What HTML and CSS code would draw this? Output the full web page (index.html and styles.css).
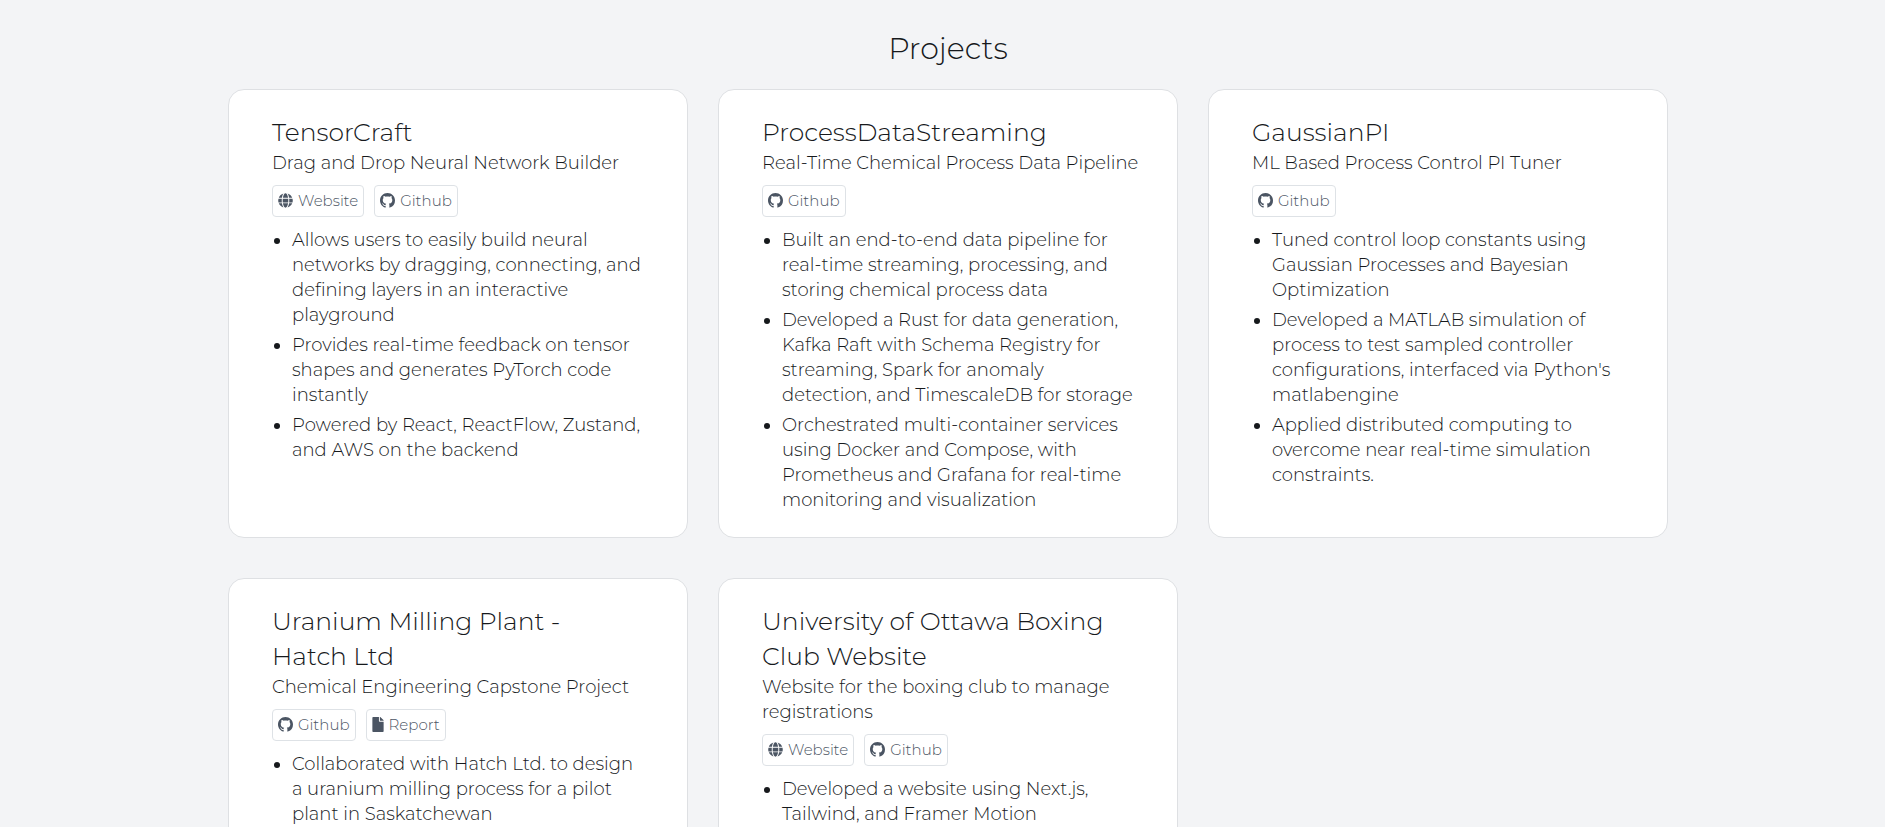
FILE: index.html
```html
<!DOCTYPE html>
<html lang="en">
<head>
<meta charset="utf-8">
<meta name="viewport" content="width=device-width, initial-scale=1">
<title>Projects</title>
<link rel="stylesheet" href="styles.css">
</head>
<body>
<svg class="sprite" aria-hidden="true">
  <symbol id="globe" viewBox="0 0 496 512"><path d="M336.500 160C322 70.700 287.800 8 248 8s-74 62.700-88.500 152h177zM152 256c0 22.200 1.200 43.500 3.300 64h185.300c2.100-20.500 3.300-41.800 3.300-64s-1.200-43.500-3.300-64H155.300c-2.100 20.500-3.300 41.800-3.300 64zm324.700-96c-28.600-67.900-86.500-120.400-158-141.600 24.400 33.800 41.200 84.700 50 141.600h108zM177.200 18.400C105.800 39.600 47.800 92.100 19.300 160h108c8.700-56.900 25.500-107.800 49.900-141.600zM487.400 192H372.700c2.100 21 3.300 42.500 3.300 64s-1.200 43-3.300 64h114.600c5.500-20.500 8.600-41.800 8.600-64s-3.100-43.500-8.500-64zM120 256c0-21.500 1.200-43 3.300-64H8.600C3.200 212.500 0 233.800 0 256s3.200 43.500 8.600 64h114.600c-2-21-3.200-42.500-3.200-64zm39.500 96c14.500 89.300 48.700 152 88.500 152s74-62.700 88.500-152h-177zm159.300 141.600c71.400-21.200 129.400-73.700 158-141.600h-108c-8.800 56.900-25.600 107.800-50 141.600zM19.300 352c28.600 67.900 86.500 120.400 158 141.600-24.400-33.800-41.200-84.700-50-141.600h-108z"/></symbol>
  <symbol id="github" viewBox="0 0 16 16"><path d="M8 0C3.580 0 0 3.580 0 8c0 3.540 2.290 6.530 5.470 7.590.4.070.55-.17.55-.38 0-.19-.01-.82-.01-1.490-2.010.37-2.530-.49-2.690-.94-.09-.23-.48-.94-.82-1.130-.28-.15-.68-.52-.01-.53.63-.01 1.080.58 1.230.82.72 1.210 1.870.87 2.330.66.07-.52.28-.87.51-1.070-1.780-.2-3.640-.89-3.640-3.950 0-.87.31-1.590.82-2.150-.08-.2-.36-1.020.08-2.120 0 0 .67-.21 2.200.82.64-.18 1.320-.27 2-.27s1.360.09 2 .27c1.530-1.040 2.200-.82 2.200-.82.44 1.100.16 1.920.08 2.120.51.56.82 1.270.82 2.150 0 3.070-1.870 3.750-3.650 3.950.29.25.54.73.54 1.480 0 1.070-.01 1.930-.01 2.200 0 .21.15.46.55.38A8.010 8.010 0 0 0 16 8c0-4.420-3.580-8-8-8z"/></symbol>
  <symbol id="file" viewBox="0 0 384 512"><path d="M224 136V0H24C10.700 0 0 10.700 0 24v464c0 13.300 10.700 24 24 24h336c13.300 0 24-10.700 24-24V160H248c-13.200 0-24-10.800-24-24zm160-14.100v6.100H256V0h6.100c6.400 0 12.500 2.500 17 7l97.900 98c4.500 4.500 7 10.600 7 16.900z"/></symbol>
</svg>
<main class="projects">
  <h1 class="heading">Projects</h1>
  <div class="grid">
    <article class="card">
      <h2 class="title">TensorCraft</h2>
      <p class="subtitle">Drag and Drop Neural Network Builder</p>
      <div class="links">
        <a class="link" href="#"><svg class="icon"><use href="#globe"/></svg>Website</a>
        <a class="link" href="#"><svg class="icon"><use href="#github"/></svg>Github</a>
      </div>
      <ul class="points">
        <li>Allows users to easily build neural networks by dragging, connecting, and defining layers in an interactive playground</li>
        <li>Provides real-time feedback on tensor shapes and generates PyTorch code instantly</li>
        <li>Powered by React, ReactFlow, Zustand, and AWS on the backend</li>
      </ul>
    </article>
    <article class="card">
      <h2 class="title">ProcessDataStreaming</h2>
      <p class="subtitle">Real-Time Chemical Process Data Pipeline</p>
      <div class="links">
        <a class="link" href="#"><svg class="icon"><use href="#github"/></svg>Github</a>
      </div>
      <ul class="points">
        <li>Built an end-to-end data pipeline for real-time streaming, processing, and storing chemical process data</li>
        <li>Developed a Rust for data generation, Kafka Raft with Schema Registry for streaming, Spark for anomaly detection, and TimescaleDB for storage</li>
        <li>Orchestrated multi-container services using Docker and Compose, with Prometheus and Grafana for real-time monitoring and visualization</li>
      </ul>
    </article>
    <article class="card">
      <h2 class="title">GaussianPI</h2>
      <p class="subtitle">ML Based Process Control PI Tuner</p>
      <div class="links">
        <a class="link" href="#"><svg class="icon"><use href="#github"/></svg>Github</a>
      </div>
      <ul class="points">
        <li>Tuned control loop constants using Gaussian Processes and Bayesian Optimization</li>
        <li>Developed a MATLAB simulation of process to test sampled controller configurations, interfaced via Python's matlabengine</li>
        <li>Applied distributed computing to overcome near real-time simulation constraints.</li>
      </ul>
    </article>
    <article class="card">
      <h2 class="title">Uranium Milling Plant - Hatch Ltd</h2>
      <p class="subtitle">Chemical Engineering Capstone Project</p>
      <div class="links">
        <a class="link" href="#"><svg class="icon"><use href="#github"/></svg>Github</a>
        <a class="link" href="#"><svg class="icon icon-file"><use href="#file"/></svg>Report</a>
      </div>
      <ul class="points">
        <li>Collaborated with Hatch Ltd. to design a uranium milling process for a pilot plant in Saskatchewan</li>
      </ul>
    </article>
    <article class="card">
      <h2 class="title">University of Ottawa Boxing Club Website</h2>
      <p class="subtitle">Website for the boxing club to manage registrations</p>
      <div class="links">
        <a class="link" href="#"><svg class="icon"><use href="#globe"/></svg>Website</a>
        <a class="link" href="#"><svg class="icon"><use href="#github"/></svg>Github</a>
      </div>
      <ul class="points">
        <li>Developed a website using Next.js, Tailwind, and Framer Motion</li>
      </ul>
    </article>
  </div>
</main>
</body>
</html>
```
FILE: styles.css
```css
* { box-sizing: border-box; }

html { scrollbar-width: none; }

body {
  margin: 0;
  background: #f3f4f6;
  color: #16191c;
  font-family: Montserrat, Inter, "Open Sans", sans-serif;
  font-size: 18px;
  font-weight: 300;
  line-height: 25px;
}

.sprite { display: none; }

.projects {
  padding: 29px 20px 20px 31px;
}

.heading {
  margin: 0 0 20px;
  font-size: 30px;
  font-weight: 300;
  line-height: 40px;
  text-align: center;
}

.grid {
  display: grid;
  grid-template-columns: repeat(3, minmax(0, 1fr));
  gap: 40px 30px;
  max-width: 1440px;
  margin: 0 auto;
}

.card {
  padding: 25px 36px 19px 43px;
  background: #fff;
  border: 1px solid #dee0e3;
  border-radius: 16px;
}

.title {
  margin: 0 0 1px;
  padding-right: 20px;
  font-size: 25px;
  font-weight: 300;
  line-height: 35px;
}

.subtitle { margin: 0; }

.links {
  display: flex;
  gap: 10px;
  margin: 9px 0 11px;
}

.link {
  display: flex;
  align-items: center;
  gap: 5px;
  height: 32px;
  padding: 0 5px 1px;
  border: 1px solid #dee2e6;
  border-radius: 4px;
  color: #4b5563;
  font-size: 15px;
  text-decoration: none;
}

.icon {
  width: 15px;
  height: 15px;
  fill: currentColor;
}

.icon-file { width: 12px; }

.points {
  margin: 0;
  padding: 0 6px 0 20px;
}

.points li { margin-bottom: 5px; }
```
